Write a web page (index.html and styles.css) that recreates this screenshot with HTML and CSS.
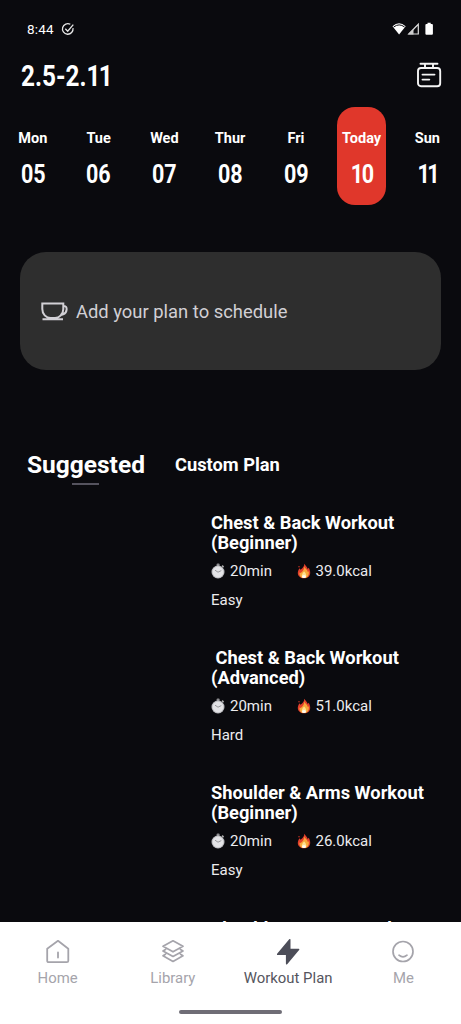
FILE: index.html
```html
<!DOCTYPE html>
<html lang="en">
<head>
<meta charset="utf-8">
<title>Workout Plan</title>
<link rel="stylesheet" href="styles.css">
</head>
<body>
<svg class="defs" width="0" height="0" aria-hidden="true">
  <symbol id="timer" viewBox="0 0 14 16">
    <rect x="5.6" y="0.6" width="3" height="3" rx="1" fill="#8b8b8f"/>
    <path d="M11 2.6l1.6 1.5" stroke="#aaa" stroke-width="1.6"/>
    <circle cx="7" cy="9" r="6.5" fill="#bdbdc1"/>
    <circle cx="7" cy="9" r="5.4" fill="#e4e4e7"/>
    <path d="M4 7.2l3 2 3.3-1.6" fill="none" stroke="#99999d" stroke-width="1"/>
  </symbol>
  <symbol id="fire" viewBox="0 0 14 16">
    <path d="M7.2.8c1.2 1.8 3 3 3.5 5.2l1-1.3c1 1.8 1.6 3.5 1.5 5.2-.2 3.3-2.7 5.4-6.2 5.4S.9 13.200.8 10c0-2 .8-3.500 1.700-4.800l1 1.500C5.800 5.200 7.500 3.400 7.200.8z" fill="#e23f2c"/>
    <path d="M7.300 3.200c.3 2.200 3.200 3.200 3.500 5.700l.9-.7c.7 3.800-1 6.800-4.600 6.800-3.300 0-5-2.200-4.600-5.600l1 .7C5.400 8.600 7.600 6.500 7.300 3.200z" fill="#f9a83a"/>
    <path d="M7.200 8.500c2.500 2.300 3 6.500-.2 6.500-3 0-3-3.700.2-6.500z" fill="#ffe08f"/>
    <ellipse cx="7" cy="13.500" rx="2" ry="1.600" fill="#fffaf0"/>
    <circle cx="2" cy="3.800" r=".7" fill="#d93829"/>
  </symbol>
</svg>
<div class="app">
  <header class="status">
    <span class="clock">8:44</span>
    <svg class="check" viewBox="0 0 14 14"><path d="M12 6.200A5.300 5.300 0 1 1 9.300 2.300M4.300 6.800l2.400 2.400 5.600-6.500" fill="none" stroke="#e8e8e8" stroke-width="1.300"/></svg>
    <svg class="signals" viewBox="0 0 42 14">
      <path d="M0.500 4.200Q7 -1.500 13.700 4.200L7.100 12.500z" fill="#fff"/>
      <path d="M1.700 5Q7.100.8 12.600 5" fill="none" stroke="#0a0a0e" stroke-width="1"/>
      <path d="M16.800 12L26.300 2.300V12z" fill="none" stroke="#ddd" stroke-width="1.200"/>
      <path d="M16 12.600L21.500 7v5.600z" fill="#ccc"/>
      <path d="M35.500.8h3.200v1.300h1.200q1 0 1 1v8.700q0 1-1 1h-5.500q-1 0-1-1V3.100q0-1 1-1h1.100z" fill="#fff"/>
    </svg>
  </header>
  <div class="titlebar">
    <h1 class="din range">2.5-2.<span class="ones">11</span></h1>
    <svg class="planner" viewBox="0 0 26 26" fill="none" stroke="#f4f4f4" stroke-width="1.900" stroke-linecap="round">
      <path d="M4.500 1.800h17M9 2v4M17 2v4"/><rect x="2" y="6" width="22.200" height="18.200" rx="3"/><path d="M6.500 12.600h12M6.500 17.600h6.800"/>
    </svg>
  </div>
  <section class="week">
    <div class="day"><span class="name">Mon</span><span class="din num">05</span></div>
    <div class="day"><span class="name">Tue</span><span class="din num">06</span></div>
    <div class="day"><span class="name">Wed</span><span class="din num">07</span></div>
    <div class="day"><span class="name">Thur</span><span class="din num">08</span></div>
    <div class="day"><span class="name">Fri</span><span class="din num">09</span></div>
    <div class="day today"><span class="name">Today</span><span class="din num ten">10</span></div>
    <div class="day"><span class="name">Sun</span><span class="din num eleven">11</span></div>
  </section>
  <section class="add">
    <svg class="cup" viewBox="0 0 27 19" fill="none" stroke="#d2d0d5" stroke-width="2">
      <path d="M1.300 1.500h21v5.500c0 5-3.800 9-8.300 9H9.500C5 16 1.300 12 1.300 7zM22.300 4h.8c3.800 0 3.200 6.800-.9 8.300-1 .4-2 .5-3 .5M1.500 17.300h20.500"/>
    </svg>
    <span class="hint">Add your plan to schedule</span>
  </section>
  <nav class="tabs"><span class="tab active">Suggested</span><span class="tab">Custom Plan</span></nav>
  <main class="list">
    <article class="plan">
      <h2>Chest &amp; Back Workout<br>(Beginner)</h2>
      <div class="meta"><span class="stat time"><svg><use href="#timer"/></svg>20min</span><span class="stat"><svg><use href="#fire"/></svg>39.0kcal</span></div>
      <div class="level">Easy</div>
    </article>
    <article class="plan">
      <h2>&nbsp;Chest &amp; Back Workout<br>(Advanced)</h2>
      <div class="meta"><span class="stat time"><svg><use href="#timer"/></svg>20min</span><span class="stat"><svg><use href="#fire"/></svg>51.0kcal</span></div>
      <div class="level">Hard</div>
    </article>
    <article class="plan">
      <h2>Shoulder &amp; Arms Workout<br>(Beginner)</h2>
      <div class="meta"><span class="stat time"><svg><use href="#timer"/></svg>20min</span><span class="stat"><svg><use href="#fire"/></svg>26.0kcal</span></div>
      <div class="level">Easy</div>
    </article>
    <article class="plan">
      <h2>Shoulder &amp; Arms Workout</h2>
    </article>
  </main>
  <footer class="bottom">
    <div class="items">
      <div class="item"><svg viewBox="0 0 26 26" fill="none" stroke="#a5a4ab" stroke-width="1.800" stroke-linejoin="round" stroke-linecap="round"><path d="M2.200 9.700L13 1.800l10.300 7.900v12q0 1.500-1.500 1.500H3.700q-1.500 0-1.500-1.500zM13 13.500v5"/></svg><span>Home</span></div>
      <div class="item"><svg viewBox="0 0 26 26" fill="none" stroke="#a5a4ab" stroke-width="1.700" stroke-linejoin="round" stroke-linecap="round"><path d="M13 1.800l10 5.500-10 5.500-10-5.500zM5.500 10.500L3 12l10 5.500L23 12l-2.500-1.500M5.500 15.300L3 16.800l10 5.600 10-5.600-2.500-1.500"/></svg><span>Library</span></div>
      <div class="item on"><svg viewBox="0 0 26 26"><path d="M14.200.3q1.300-1 1.300.8v8.600h8.200q1.200.2.400 1.400L12.400 25q-1.500 1.300-1.500-.6v-8.300H2.700q-1.300-.2-.4-1.500z" fill="#4c4d58"/></svg><span>Workout Plan</span></div>
      <div class="item"><svg viewBox="0 0 26 26" fill="none" stroke="#a5a4ab" stroke-width="1.700" stroke-linecap="round"><circle cx="13" cy="12.500" r="10"/><path d="M9 16.200q4 3.300 8 0"/></svg><span>Me</span></div>
    </div>
    <div class="handle"></div>
  </footer>
</div>
</body>
</html>
```
FILE: styles.css
```css
* { box-sizing: border-box; margin: 0; padding: 0; }
body { background: #0a0a0e; color: #fff; font-family: Roboto, "Noto Sans", sans-serif; overflow: hidden; }
svg { display: block; flex: none; }
.defs { position: absolute; }
.app { width: 461px; height: 1024px; display: flex; flex-direction: column; overflow: hidden; }
.status { height: 58px; flex: none; display: flex; align-items: center; padding: 0 27px; }
.clock { font-size: 13.5px; font-weight: 400; letter-spacing: .2px; }
.check { width: 14px; height: 14px; margin-left: 7px; }
.signals { width: 42px; height: 14px; margin-left: auto; }
.titlebar { height: 49px; flex: none; display: flex; justify-content: space-between; padding: 0 19px 0 21px; }
.din { font-weight: 700; display: block; }
.range { font-size: 30px; line-height: 36px; transform: scaleX(.81); transform-origin: left; }
.ones { letter-spacing: -2px; }
.planner { width: 26px; height: 26px; margin-top: 4px; }
.week { display: grid; grid-template-columns: repeat(7, 65.75px); height: 98px; flex: none; }
.day { display: flex; flex-direction: column; align-items: center; padding-top: 23px; }
.today { width: 49px; margin: 0 auto; background: #e0372b; border-radius: 18px; }
.name { font-size: 14.5px; font-weight: 700; line-height: 18px; }
.num { font-size: 25px; line-height: 30px; margin-top: 12px; transform: scaleX(.86); }
.ten { letter-spacing: -1.5px; }
.eleven { letter-spacing: -3px; }
.add { height: 118px; flex: none; margin: 47px 20px 0; border-radius: 26px; background: #2e2e2e; display: flex; align-items: center; padding-left: 21px; gap: 8px; color: #d2d0d5; font-size: 18.4px; }
.cup { width: 27px; height: 19px; }
.hint { line-height: 22px; padding-top: 1px; }
.tabs { height: 45px; flex: none; margin-top: 72px; padding-left: 27px; display: flex; align-items: center; gap: 30px; line-height: 40px; }
.tab { font-size: 18.3px; font-weight: 700; }
.active { font-size: 24.5px; position: relative; }
.active::after { content: ""; position: absolute; left: 45px; bottom: 0; width: 27px; height: 2px; background: #55535e; }
.list { flex: 1; min-height: 0; overflow: hidden; padding: 26px 0 0 211px; }
.plan { height: 135.200px; }
.plan h2 { font-size: 18.3px; line-height: 20px; font-weight: 700; white-space: nowrap; }
.meta { display: flex; height: 20px; margin-top: 7.500px; font-size: 15px; line-height: 20px; color: #ececee; }
.time { width: 85.5px; }
.stat { display: flex; align-items: center; gap: 5px; }
.stat svg { width: 14px; height: 16px; }
.level { font-size: 15px; line-height: 20px; margin-top: 9.500px; color: #ececee; }
.bottom { height: 102px; flex: none; background: #fff; color: #a5a4ab; display: flex; flex-direction: column; align-items: center; }
.items { width: 100%; display: grid; grid-template-columns: repeat(4, 1fr); padding-top: 17px; }
.item { display: flex; flex-direction: column; align-items: center; font-size: 14.900px; line-height: 18px; gap: 4px; }
.item svg { width: 26px; height: 26px; }
.on { color: #55555e; }
.handle { width: 103px; height: 4px; border-radius: 2px; background: #6f6d76; margin-top: 23px; }
```
